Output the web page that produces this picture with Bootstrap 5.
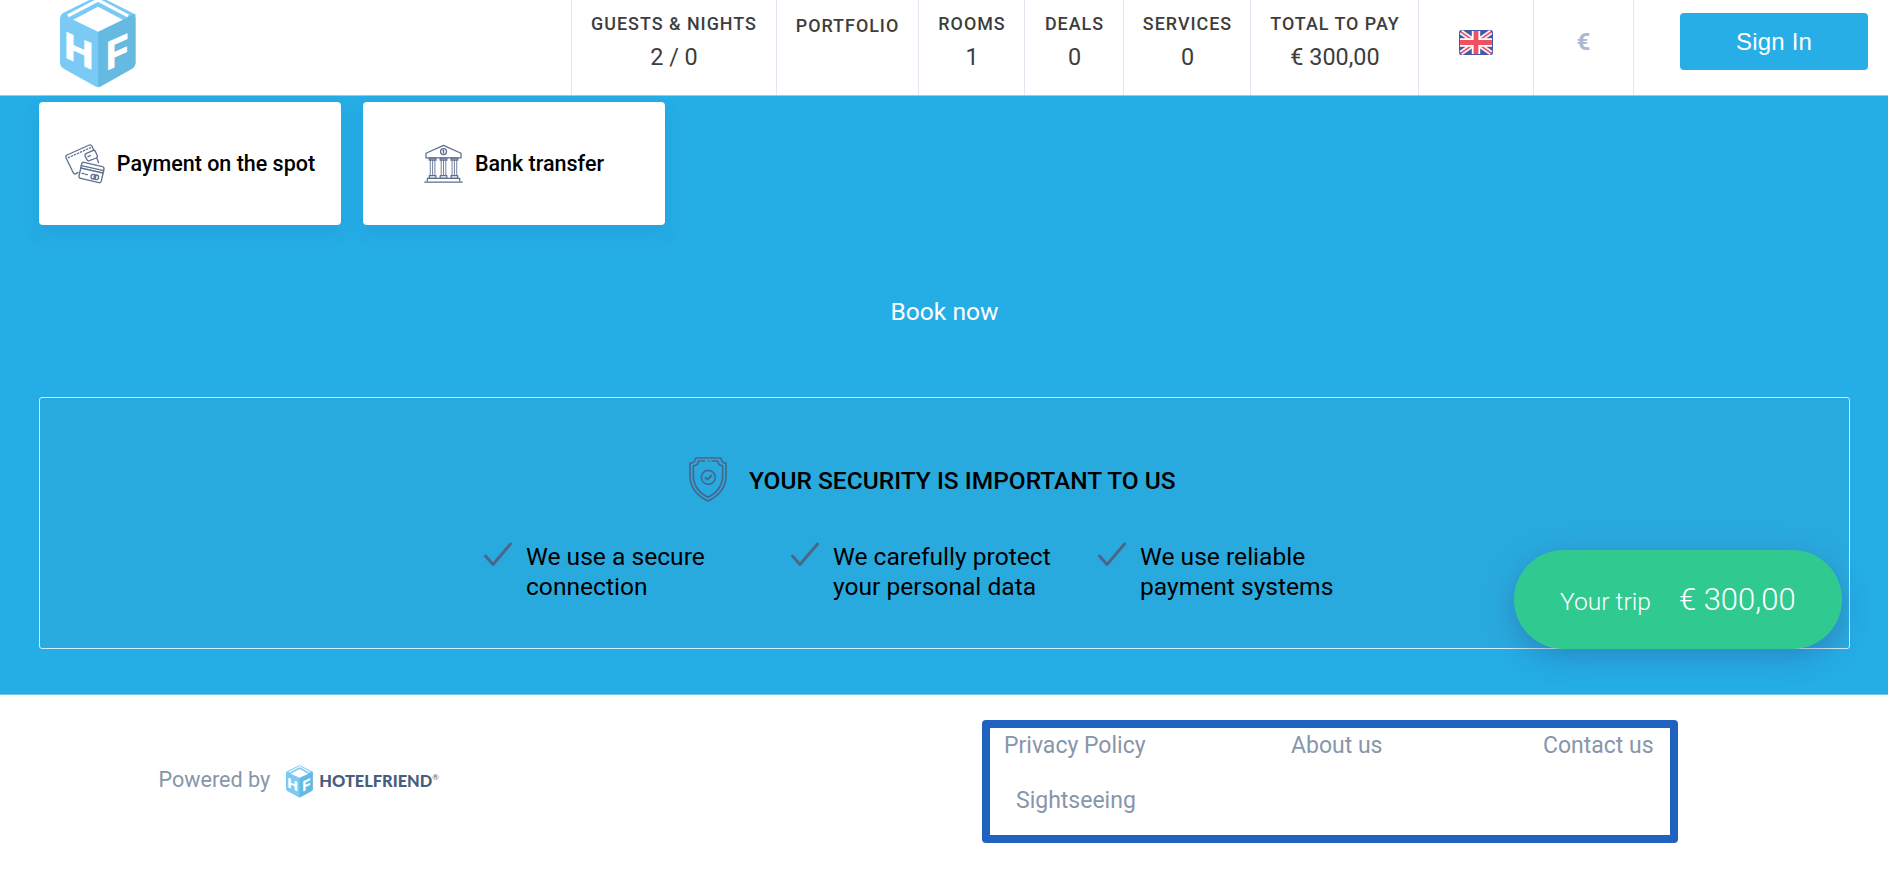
<!DOCTYPE html>
<html lang="en">
<head>
<meta charset="utf-8">
<meta name="viewport" content="width=device-width, initial-scale=1">
<title>Hotelfriend booking</title>
<link href="https://cdn.jsdelivr.net/npm/bootstrap@5.3.0/dist/css/bootstrap.min.css" rel="stylesheet">
<style>
body{font-family:Roboto,"Liberation Sans",sans-serif;color:#000;overflow:hidden;height:883px}
svg{display:block;flex:none}
.topbar{height:96px;border-bottom:1px solid #8ccfe9}
.brand-cell{width:571px;padding-left:60px;overflow:hidden}
.brand-cell svg{margin-top:-4px}
.info-cell{border-left:1px solid #e3e5f0;color:#3d3d3d;padding-top:12.6px;line-height:22px}
.info-cell b{font-size:17.9px;font-weight:500;letter-spacing:1px;display:block;margin-left:1px}
.info-cell i{font-style:normal;font-size:23.4px;line-height:28px;display:block;margin:8px 0 0 1px}
.w-guests{width:205px}.w-portfolio{width:142px}.w-rooms{width:106px}.w-deals{width:99px}
.w-services{width:127px}.w-total{width:168px}.w-flag{width:115px}.w-euro{width:100px}
.info-cell.w-guests b{margin-left:0}
.info-cell.w-portfolio b{padding-top:2px;margin-left:0}
.info-cell.w-flag{padding:30px 0 0 40px}
.info-cell.w-euro{padding-top:0;color:#aab9d0;font-weight:700;font-size:24px;line-height:84px}
.info-cell.w-sign{padding:13px 0 0 46px}
.sign{width:188px;height:57px;border:0;border-radius:4px;background:#27aee6;color:#fff;font:24px/56px "Liberation Sans",sans-serif;letter-spacing:.2px}
.stage{background:#25ade6;height:599px;padding:6px 38px 0 39px;border-bottom:1px solid #74c5e5}
.options{gap:22px}
.pay{width:302px;height:123px;border-radius:4px;border:0;gap:12px;box-shadow:0 8px 18px rgba(35,95,160,.13);font-size:21.5px;font-weight:500;color:#000}
.pay span{padding-top:1px}
.book{font-size:24.6px;color:#fff;line-height:30px;margin-top:72px}
.secure{height:252px;margin-top:70px;border:1px solid #d3eefa;border-radius:3px;background:#29aadf;padding-top:59px}
.secure-head{padding-left:649px;gap:22px;height:45px}
.secure h2{font-size:24.5px;line-height:30px;font-weight:500;margin:2px 0 0}
.points{font-size:24.6px;line-height:30px;padding:39.5px 0 0 444px}
.points>div{width:307px;gap:14px}
.trip{position:absolute;left:1514px;top:550px;width:328px;height:99px;border-radius:50px;background:#30ca91;color:#fff;font-weight:300;line-height:40px;font-size:24.6px;padding:30px 0 0 46px;gap:28px;box-shadow:0 8px 28px rgba(45,80,140,.38)}
.trip strong{font-weight:300;font-size:31px}
.foot{height:188px;color:#8796aa}
.powered{width:982px;padding:70px 0 0 158.5px;font-size:21.6px;line-height:30px}
.wordmark{font:900 16.4px/31px Lato,sans-serif;color:#475d7e;margin-left:6px}
.wordmark sup{font-size:8px;font-weight:400;top:-7px;vertical-align:baseline}
.framed{width:696px;height:123px;margin-top:24.5px;border:8px solid #2062bf;border-radius:4px;font-size:23px;line-height:28px;padding:4px 0 0 14px;display:grid;grid-template-columns:287px 252px 1fr;grid-template-rows:55px 28px}
.framed a{color:inherit;text-decoration:none;padding-top:.7px}
</style>
</head>
<body>
<svg width="0" height="0" class="position-absolute">
 <symbol id="cube" viewBox="62 -12 230 276">
  <path d="M165-8Q177-14 189-8L282 38Q291 44 291 54V188Q291 200 281 206L187 259Q177 265 167 259L72 206Q62 200 62 188V54Q62 44 71 38Z" fill="#7bcaf5"/>
  <path d="M177 96L290 40V188Q290 200 281 206L187 259Q182 263 177 263Z" fill="#66b9e0"/>
  <path d="M102 59L177 19L252 59L177 95Z" fill="#fff"/>
  <path d="M86 47L177-1L268 47" fill="none" stroke="#fff" stroke-width="10"/>
  <g fill="#fff" stroke="#fff" stroke-width="3" font-family="Liberation Sans,sans-serif" font-weight="700" font-size="100">
   <text transform="matrix(1.22 .56 0 1.12 74.5 171)">H</text>
   <text transform="matrix(1.08 -.48 0 1.2 202 212)">F</text>
  </g>
 </symbol>
 <symbol id="tick" viewBox="0 0 28 25"><path d="M1.5 14L9 22.5L26.5 2" fill="none" stroke="#4c6689" stroke-width="3" stroke-linecap="round" stroke-linejoin="round"/></symbol>
</svg>
<header class="topbar d-flex bg-white">
 <div class="brand-cell"><svg width="76" height="92"><use href="#cube"/></svg></div>
 <div class="info-cell text-center w-guests"><b>GUESTS &amp; NIGHTS</b><i class="ms-0">2 / 0</i></div>
 <div class="info-cell text-center w-portfolio"><b>PORTFOLIO</b></div>
 <div class="info-cell text-center w-rooms"><b>ROOMS</b><i>1</i></div>
 <div class="info-cell text-center w-deals"><b>DEALS</b><i>0</i></div>
 <div class="info-cell text-center w-services"><b>SERVICES</b><i>0</i></div>
 <div class="info-cell text-center w-total"><b>TOTAL TO PAY</b><i>€ 300,00</i></div>
 <div class="info-cell w-flag">
  <svg width="34" height="25" viewBox="0 0 34 25"><rect width="34" height="25" rx="2.5" fill="#4659a8"/><path d="M2 2L32 23M32 2L2 23" stroke="#fff" stroke-width="5"/><path d="M2 2L32 23M32 2L2 23" stroke="#f0586a" stroke-width="1.8"/><path d="M17 1V24M1 12.5H33" stroke="#fff" stroke-width="8.4"/><path d="M17 1V24M1 12.5H33" stroke="#f0505f" stroke-width="4.8"/></svg>
 </div>
 <div class="info-cell text-center w-euro">€</div>
 <div class="info-cell w-sign"><button class="sign p-0">Sign In</button></div>
</header>
<main class="stage">
 <div class="options d-flex">
  <div class="card pay flex-row align-items-center justify-content-center">
   <svg width="40" height="40" viewBox="101 158 120 120" fill="none" stroke="#62718f" stroke-width="4" stroke-linejoin="round" stroke-linecap="round">
    <path d="M140 243L134 247Q128 250 125 243L104 199Q102 194 107 191L174 161Q179 159 182 164L187 176M196 199L202 214"/>
    <path d="M111 199L178 169" stroke-dasharray="4 6"/>
    <path d="M164 187L186 177Q190 176 192 180L198 193Q199 198 195 200L174 208Q169 210 167 205L161 194Q159 190 164 187ZM170 196L177 193"/>
    <path d="M158 213L213 226Q219 227 218 233L210 269Q209 275 203 274L148 261Q142 260 143 254L151 218Q152 212 158 213Z" fill="#fff"/>
    <path d="M150 223L217 238M148 230L215 245M152 246L158 247M162 249L168 250"/>
    <circle cx="186" cy="256" r="7"/><circle cx="195" cy="258" r="7"/>
   </svg>
   <span>Payment on the spot</span>
  </div>
  <div class="card pay flex-row align-items-center justify-content-center">
   <svg width="39" height="39" viewBox="222 161 118 118" fill="none" stroke="#5d6d8d" stroke-width="3.8" stroke-linejoin="round">
    <path d="M228 189L281 165L334 189V203H228Z"/><circle cx="281" cy="184" r="9"/><path d="M281 178V190M278 181H283"/>
    <path d="M238 204H258V210H238ZM271 204H291V210H271ZM304 204H324V210H304Z" fill="#a9b2c4"/>
    <path d="M241 210V257M248 210V257M255 210V257M274 210V257M281 210V257M288 210V257M307 210V257M314 210V257M321 210V257" stroke-width="2.6"/>
    <path d="M238 257H258V264H238ZM271 257H291V264H271ZM304 257H324V264H304ZM232 274V265H330V274M223 276H339"/>
   </svg>
   <span>Bank transfer</span>
  </div>
 </div>
 <div class="book text-center">Book now</div>
 <section class="secure">
  <div class="secure-head d-flex align-items-center">
   <svg width="38" height="45" viewBox="57 231 114 135" fill="none" stroke="#49658b" stroke-width="5" stroke-linejoin="round">
    <path d="M77 234H153Q154 248 168 250V290Q166 338 114 363Q62 338 60 290V250Q76 248 77 234Z"/>
    <path d="M105 243H86Q84 256 70 258V290Q73 332 114 352Q155 332 158 290V258Q145 256 143 243H124M114 243H119"/>
    <circle cx="115" cy="292" r="21"/><path d="M105 292L112 299L126 285" stroke-width="6"/>
   </svg>
   <h2>YOUR SECURITY IS IMPORTANT TO US</h2>
  </div>
  <div class="points d-flex">
   <div class="d-flex"><svg width="28" height="25"><use href="#tick"/></svg><span>We use a secure<br>connection</span></div>
   <div class="d-flex"><svg width="28" height="25"><use href="#tick"/></svg><span>We carefully protect<br>your personal data</span></div>
   <div class="d-flex"><svg width="28" height="25"><use href="#tick"/></svg><span>We use reliable<br>payment systems</span></div>
  </div>
 </section>
</main>
<div class="trip d-flex align-items-baseline"><span>Your trip</span><strong>€ 300,00</strong></div>
<footer class="foot d-flex">
 <div class="powered d-flex align-items-start"><span>Powered by</span><svg class="ms-3" width="27" height="33"><use href="#cube"/></svg><span class="wordmark">HOTELFRIEND<sup>®</sup></span></div>
 <nav class="framed"><a href="#">Privacy Policy</a><a href="#">About us</a><a href="#">Contact us</a><a href="#" class="ps-2 ms-1">Sightseeing</a></nav>
</footer>
<script src="https://cdn.jsdelivr.net/npm/bootstrap@5.3.0/dist/js/bootstrap.bundle.min.js"></script>
</body>
</html>
